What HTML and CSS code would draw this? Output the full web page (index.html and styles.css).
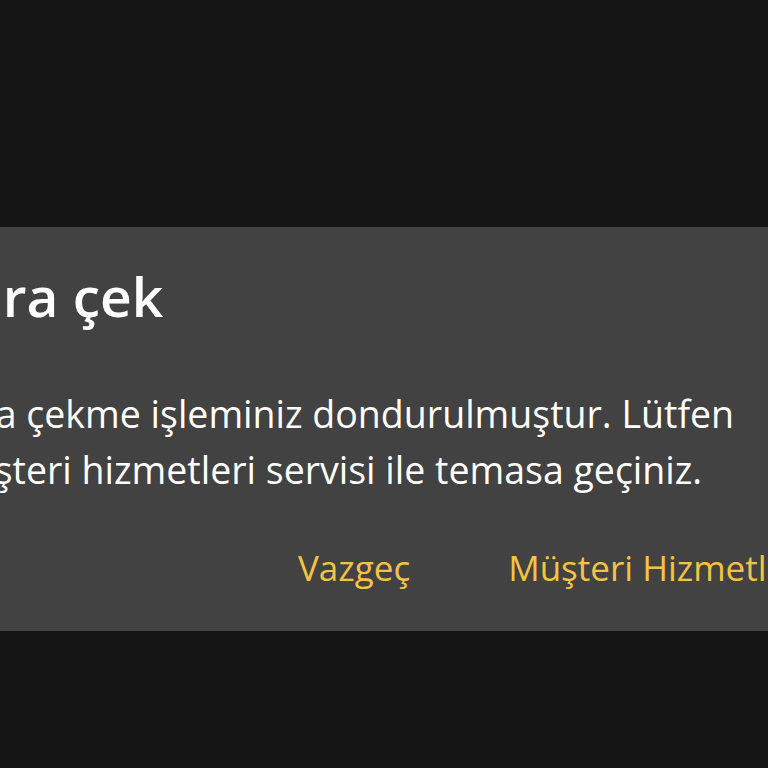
FILE: index.html
```html
<!DOCTYPE html>
<html lang="tr">
<head>
<meta charset="utf-8">
<link rel="stylesheet" href="styles.css">
</head>
<body>
<div class="screen">
  <div class="viewport">
    <div class="dialog">
      <h1 class="title">Para çek</h1>
      <p class="message">Para çekme işleminiz dondurulmuştur. Lütfen<br>müşteri hizmetleri servisi ile temasa geçiniz.</p>
      <div class="actions">
        <button class="btn">Vazgeç</button>
        <button class="btn">Müşteri Hizmetleri</button>
      </div>
    </div>
  </div>
</div>
</body>
</html>
```
FILE: styles.css
```css
html, body {
  margin: 0;
  padding: 0;
  background: #151515;
  width: 768px;
  height: 768px;
  overflow: hidden;
}
.screen {
  padding-top: 227px;
}
.viewport {
  width: 768px;
  overflow: hidden;
}
.dialog {
  width: 1100px;
  margin-left: -103px;
  background: #424242;
  padding: 37px 0 35px 40px;
  box-sizing: border-box;
  font-family: "Open Sans", sans-serif;
  color: #ffffff;
}
.title {
  margin: 0;
  font-size: 55px;
  line-height: 64px;
  font-weight: 600;
}
.message {
  margin: 58px 0 0 0;
  font-size: 37.5px;
  line-height: 56px;
  font-weight: 400;
  white-space: nowrap;
}
.actions {
  margin-top: 42px;
  display: flex;
  gap: 98px;
  padding-left: 361px;
}
.btn {
  background: none;
  border: 0;
  padding: 0;
  font-family: "Open Sans", sans-serif;
  font-size: 35px;
  line-height: 56px;
  color: #f5c342;
  white-space: nowrap;
}
```
